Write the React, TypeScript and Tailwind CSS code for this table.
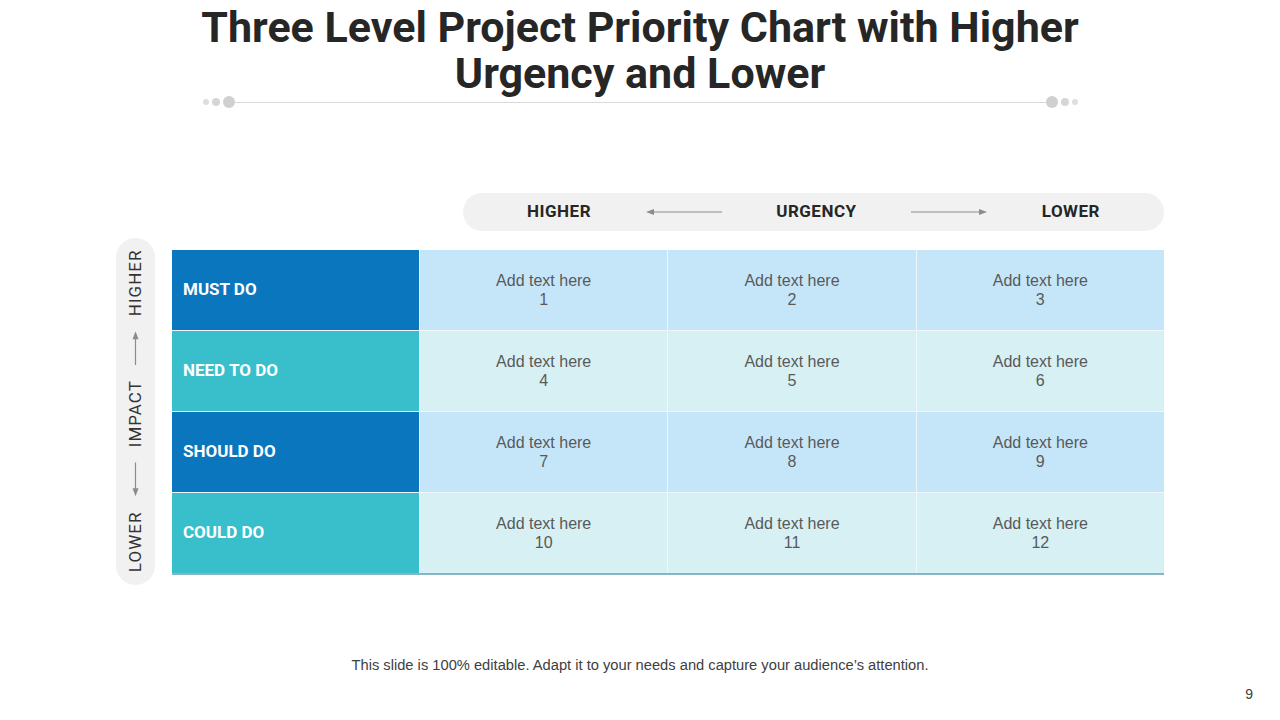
import React from "react";

const rows = [
  { label: "MUST DO", head: "bg-[#0a76bd]", cell: "bg-[#c5e6f9]" },
  { label: "NEED TO DO", head: "bg-[#38bfcb]", cell: "bg-[#d6f0f4]" },
  { label: "SHOULD DO", head: "bg-[#0a76bd]", cell: "bg-[#c5e6f9]" },
  { label: "COULD DO", head: "bg-[#38bfcb]", cell: "bg-[#d6f0f4]" },
];

function HArrow({ dir }: { dir: "left" | "right" }) {
  return (
    <svg width="76" height="8" viewBox="0 0 76 8">
      {dir === "left" ? (
        <>
          <line x1="6" y1="4" x2="76" y2="4" stroke="#8c8c8c" strokeWidth="1.2" />
          <path d="M0 4 L8 1 L8 7 Z" fill="#8c8c8c" />
        </>
      ) : (
        <>
          <line x1="0" y1="4" x2="70" y2="4" stroke="#8c8c8c" strokeWidth="1.2" />
          <path d="M76 4 L68 1 L68 7 Z" fill="#8c8c8c" />
        </>
      )}
    </svg>
  );
}

// drawn in the unrotated vertical frame; the pill is flipped 180deg
function VArrow({ dir }: { dir: "up" | "down" }) {
  return (
    <svg width="8" height="34" viewBox="0 0 8 34">
      {dir === "up" ? (
        <>
          <line x1="4" y1="6" x2="4" y2="34" stroke="#8c8c8c" strokeWidth="1.2" />
          <path d="M4 0 L1 8 L7 8 Z" fill="#8c8c8c" />
        </>
      ) : (
        <>
          <line x1="4" y1="0" x2="4" y2="28" stroke="#8c8c8c" strokeWidth="1.2" />
          <path d="M4 34 L1 26 L7 26 Z" fill="#8c8c8c" />
        </>
      )}
    </svg>
  );
}

export default function App() {
  return (
    <div className="w-[1280px] h-[720px] bg-white flex flex-col font-['Roboto',sans-serif] text-[#262626]">
      <h1 className="mt-[4px] mx-auto w-[1000px] text-center font-bold text-[43px] leading-[46px]">
        Three Level Project Priority Chart with Higher
        <br />
        Urgency and Lower
      </h1>

      <div className="ml-[203px] w-[875px] h-[12px] flex items-center">
        <span className="w-[6px] h-[6px] rounded-full bg-[#dedede]" />
        <span className="ml-[3px] w-[8px] h-[8px] rounded-full bg-[#d6d6d6]" />
        <span className="ml-[3px] w-[12px] h-[12px] rounded-full bg-[#d0d0d0]" />
        <span className="flex-1 h-px bg-[#d9d9d9]" />
        <span className="w-[12px] h-[12px] rounded-full bg-[#d0d0d0]" />
        <span className="ml-[3px] w-[8px] h-[8px] rounded-full bg-[#d6d6d6]" />
        <span className="ml-[3px] w-[6px] h-[6px] rounded-full bg-[#dedede]" />
      </div>

      <div className="mt-[85px] ml-[463px] w-[701px] h-[38px] rounded-full bg-[#f1f1f1] flex items-center justify-between px-[64px] font-bold text-[17px] tracking-[0.5px]">
        <span>HIGHER</span>
        <HArrow dir="left" />
        <span>URGENCY</span>
        <HArrow dir="right" />
        <span>LOWER</span>
      </div>

      <div className="mt-[7px] flex items-start">
        <div className="ml-[116px] w-[39px] h-[347px] rounded-full bg-[#f1f1f1] flex items-center justify-center">
          <div className="[writing-mode:vertical-rl] rotate-180 flex items-center gap-[15px] text-[17px] tracking-[1px] text-[#333333]">
            <span>LOWER</span>
            <VArrow dir="up" />
            <span>IMPACT</span>
            <VArrow dir="down" />
            <span>HIGHER</span>
          </div>
        </div>

        <div className="ml-[17px] mt-[12px] w-[992px] grid grid-cols-[247px_1fr_1fr_1fr] gap-px bg-[#eef8fc] border-b-2 border-[#86b6c6]">
          {rows.map((r, i) => (
            <React.Fragment key={r.label}>
              <div className={`${r.head} h-[80px] flex items-center pl-[11px] text-white font-bold text-[17px]`}>
                {r.label}
              </div>
              {[1, 2, 3].map((c) => (
                <div
                  key={c}
                  className={`${r.cell} h-[80px] flex flex-col items-center justify-center font-['Liberation_Sans',Arial,sans-serif] text-[16px] leading-[19px] text-[#595959]`}
                >
                  <span>Add text here</span>
                  <span>{i * 3 + c}</span>
                </div>
              ))}
            </React.Fragment>
          ))}
        </div>
      </div>

      <p className="mt-[69px] text-center font-['Liberation_Sans',Arial,sans-serif] text-[14.7px] text-[#404040]">
        This slide is 100% editable. Adapt it to your needs and capture your audience’s attention.
      </p>
      <div className="mt-[8px] pr-[27px] text-right font-['Liberation_Sans',Arial,sans-serif] text-[14px] text-[#404040]">
        9
      </div>
    </div>
  );
}
